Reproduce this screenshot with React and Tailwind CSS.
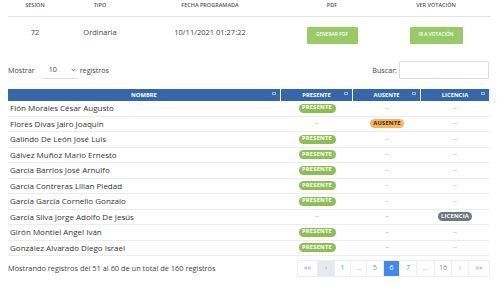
import React from "react";

const rows = [
  ["Fión Morales César Augusto", "P"],
  ["Flores Divas Jairo Joaquín", "A"],
  ["Galindo De León José Luis", "P"],
  ["Gálvez Muñoz Mario Ernesto", "P"],
  ["García Barrios José Arnulfo", "P"],
  ["García Contreras Lilian Piedad", "P"],
  ["García García Cornelio Gonzalo", "P"],
  ["García Silva Jorge Adolfo De Jesús", "L"],
  ["Girón Montiel Angel Iván", "P"],
  ["González Alvarado Diego Israel", "P"],
];

function Badge({ kind }) {
  if (kind === "P")
    return (
      <span className="inline-flex items-center justify-center h-[9px] w-[37px] rounded-full bg-[#8cc152] text-white font-bold text-[5.8px] leading-none tracking-[0.2px]">
        PRESENTE
      </span>
    );
  if (kind === "A")
    return (
      <span className="inline-flex items-center justify-center h-[9px] w-[34px] rounded-full bg-[#fbb35c] text-[#3a2a10] font-bold text-[5.8px] leading-none tracking-[0.2px]">
        AUSENTE
      </span>
    );
  return (
    <span className="inline-flex items-center justify-center h-[9px] w-[34px] rounded-full bg-[#6f7780] text-white font-bold text-[5.8px] leading-none tracking-[0.2px]">
      LICENCIA
    </span>
  );
}

const Dash = () => <span className="text-[#888] text-[6px]">--</span>;

function HeadCell({ children, className = "" }) {
  return (
    <div className={"relative flex items-center justify-center border-r border-white text-white font-bold text-[5.8px] " + className}>
      {children}
      <span className="absolute right-[4px] top-[2.5px] w-[4px] h-[3px] border border-[#9bb3d6]"></span>
    </div>
  );
}

const pages = [
  { t: "««", w: 20 },
  { t: "‹", w: 17, bg: "bg-[#e6e9ed]" },
  { t: "1", w: 16 },
  { t: "…", w: 16, gray: true },
  { t: "5", w: 17 },
  { t: "6", w: 16, active: true },
  { t: "7", w: 17 },
  { t: "…", w: 18, gray: true },
  { t: "16", w: 17 },
  { t: "›", w: 17 },
  { t: "»»", w: 20 },
];

export default function App() {
  return (
    <div className="w-[500px] h-[287px] bg-white overflow-hidden text-[#333]" style={{ fontFamily: '"Open Sans", "Noto Sans", sans-serif' }}>
      {/* top table */}
      <div className="mx-[8px] w-[482px]">
        <div className="grid grid-cols-[54px_76px_144px_100px_108px] h-[17px] border-b border-[#e3e3e3] text-[5.5px] text-[#555] font-semibold">
          <div className="flex justify-center pt-[1px]">SESION</div>
          <div className="flex justify-center pt-[1px]">TIPO</div>
          <div className="flex justify-center pt-[1px]">FECHA PROGRAMADA</div>
          <div className="flex justify-center pt-[1px]">PDF</div>
          <div className="flex justify-center pt-[1px]">VER VOTACIÓN</div>
        </div>
        <div className="grid grid-cols-[54px_76px_144px_100px_108px] h-[36px] items-center text-[7.5px] text-[#444]">
          <div className="flex justify-center -mt-[4px]">72</div>
          <div className="flex justify-center -mt-[4px]">Ordinaria</div>
          <div className="flex justify-center -mt-[4px]">10/11/2021 01:27:22</div>
          <div className="flex justify-center">
            <button className="h-[17px] w-[51px] bg-[#98ca68] text-white text-[4.8px] font-semibold rounded-[1px]">GENERAR PDF</button>
          </div>
          <div className="flex justify-center">
            <button className="h-[17px] w-[53px] bg-[#98ca68] text-white text-[4.8px] font-semibold rounded-[1px]">IR A VOTACIÓN</button>
          </div>
        </div>
      </div>

      {/* controls */}
      <div className="flex items-center justify-between mx-[8px] w-[481px] h-[36px] pb-[2px]">
        <div className="flex items-center text-[7.2px] text-[#444]">
          <span>Mostrar</span>
          <div className="ml-[7px] w-[36px] h-[16px] flex items-center justify-between border-b border-[#e0e0e0] pl-[7px] pr-[2px] mt-[2px]">
            <span className="-mt-[2px]">10</span>
            <svg width="5" height="4" viewBox="0 0 5 4" className="-mt-[2px]"><path d="M0.7 1 L2.5 2.8 L4.3 1" fill="none" stroke="#555" strokeWidth="0.9" /></svg>
          </div>
          <span className="ml-[2px]">registros</span>
        </div>
        <div className="flex items-center text-[7.2px] text-[#444]">
          <span>Buscar:</span>
          <div className="ml-[2px] w-[90px] h-[18px] border border-[#dcdcdc] rounded-[1px]"></div>
        </div>
      </div>

      {/* main table */}
      <div className="mx-[8px] w-[481px]">
        <div className="grid grid-cols-[273px_72px_68px_68px] h-[12px] bg-[#3566aa]">
          <HeadCell>NOMBRE</HeadCell>
          <HeadCell>PRESENTE</HeadCell>
          <HeadCell>AUSENTE</HeadCell>
          <HeadCell className="border-r-0">LICENCIA</HeadCell>
        </div>
        {rows.map(([name, k], i) => (
          <div key={i} className="grid grid-cols-[273px_72px_68px_68px] h-[15.5px] border-b border-[#ececec] items-center">
            <div className="pl-[2px] text-[8px] text-[#333]">{name}</div>
            <div className="flex justify-center">{k === "P" ? <Badge kind="P" /> : <Dash />}</div>
            <div className="flex justify-center">{k === "A" ? <Badge kind="A" /> : <Dash />}</div>
            <div className="flex justify-center">{k === "L" ? <Badge kind="L" /> : <Dash />}</div>
          </div>
        ))}
      </div>

      {/* footer */}
      <div className="flex items-center justify-between mx-[8px] w-[482px] mt-[4px]">
        <div className="text-[7.4px] text-[#444]">Mostrando registros del 51 al 60 de un total de 160 registros</div>
        <div className="flex h-[17px] border border-[#eceef1] rounded-[2px] overflow-hidden">
          {pages.map((p, i) => (
            <div
              key={i}
              style={{ width: p.w }}
              className={
                "flex items-center justify-center text-[7px] border-r border-[#eceef1] last:border-r-0 " +
                (p.active ? "bg-[#3f87f5] text-white " : (p.bg || "") + " ") +
                (p.gray ? "text-[#aaa]" : p.active ? "" : "text-[#5b95ee]")
              }
            >
              {p.t}
            </div>
          ))}
        </div>
      </div>
    </div>
  );
}
